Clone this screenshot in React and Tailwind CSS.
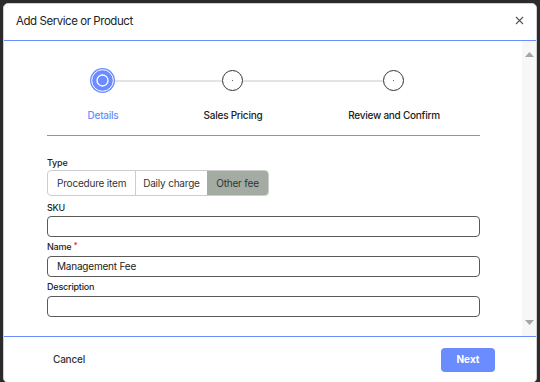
export default function App() {
  return (
    <div className="h-[382px] w-[540px] overflow-hidden bg-[#2b2b2b] pt-[3px] pl-[3px] font-[family-name:Inter,sans-serif]">
      <div className="flex h-[380px] w-[534px] flex-col overflow-hidden rounded-[5px] border border-[#cfcfcf] bg-white">
        {/* header */}
        <div className="flex h-[37px] shrink-0 items-center justify-between border-b border-[#6b8cff] pl-[12px] pr-[12px]">
          <h1 className="text-[11.5px] tracking-[-0.45px] text-[#222]">Add Service or Product</h1>
          <svg width="9" height="9" viewBox="0 0 9 9" className="mb-[4px]">
            <path d="M1 1L8 8M8 1L1 8" stroke="#555" strokeWidth="1.1" />
          </svg>
        </div>

        {/* body */}
        <div className="flex h-[295px] shrink-0">
          <div className="flex-1 pl-[43px] pr-[42px]">
            {/* stepper */}
            <div className="mt-[27px] flex items-center pl-[43px]">
              <svg width="25" height="25" viewBox="0 0 25 25">
                <circle cx="12.5" cy="12.5" r="12.5" fill="#6b8cff" />
                <circle cx="12.5" cy="12.5" r="10.8" fill="none" stroke="#fff" strokeWidth="1" />
                <circle cx="12.5" cy="12.5" r="5.5" fill="none" stroke="#fff" strokeWidth="1.3" />
              </svg>
              <div className="h-[2px] w-[107px] bg-[#e3e3e3]" />
              <div className="flex h-[21px] w-[21px] items-center justify-center rounded-full border border-[#333]">
                <div className="h-[1.5px] w-[1.5px] rounded-full bg-[#333]" />
              </div>
              <div className="h-[2px] w-[140px] bg-[#e3e3e3]" />
              <div className="flex h-[21px] w-[21px] items-center justify-center rounded-full border border-[#333]">
                <div className="h-[1.5px] w-[1.5px] rounded-full bg-[#333]" />
              </div>
            </div>
            <div className="mt-[16px] flex pl-[6px] text-[10px] font-medium leading-[12px] tracking-[-0.25px]">
              <div className="w-[100px] text-center text-[#6b8cff]">Details</div>
              <div className="ml-[30px] w-[100px] text-center text-[#222]">Sales Pricing</div>
              <div className="ml-[61px] w-[100px] text-center text-[#222]">Review and Confirm</div>
            </div>
            <div className="mt-[14px] h-px bg-[#7b93ee]" />

            {/* form */}
            <div className="mt-[21px] text-[9px] font-medium leading-[12px] tracking-[-0.2px] text-[#222]">Type</div>
            <div className="mt-[1px] flex h-[26px] w-fit overflow-hidden rounded-[4px] border border-[#cdcdcd] text-[10px] tracking-[-0.2px] text-[#333]">
              <div className="flex items-center px-[9px]">Procedure item</div>
              <div className="flex items-center border-l border-[#cdcdcd] px-[7px]">Daily charge</div>
              <div className="flex items-center bg-[#a4aba3] px-[9.5px]">Other fee</div>
            </div>

            <div className="mt-[6px] text-[9px] font-medium leading-[12px] tracking-[-0.2px] text-[#222]">SKU</div>
            <div className="mt-[2px] h-[21px] rounded-[4px] border border-[#5a5a5a]" />

            <div className="mt-[4px] text-[9px] font-medium leading-[12px] tracking-[-0.2px] text-[#222]">
              Name<span className="ml-[2px] align-top text-[8px] leading-[8px] text-[#e02020]">*</span>
            </div>
            <div className="mt-[3px] flex h-[21px] items-center rounded-[4px] border border-[#5a5a5a] px-[9px] text-[10px] tracking-[-0.2px] text-[#222]">
              Management Fee
            </div>

            <div className="mt-[4px] text-[9px] font-medium leading-[12px] tracking-[-0.2px] text-[#222]">Description</div>
            <div className="mt-[3px] h-[21px] rounded-[4px] border border-[#5a5a5a]" />
          </div>

          {/* scrollbar */}
          <div className="flex w-[14px] flex-col items-center justify-between bg-[#f7f7f7] py-[11px]">
            <svg width="9" height="5" viewBox="0 0 9 5">
              <path d="M0 5L4.5 0L9 5Z" fill="#a5a5a5" />
            </svg>
            <svg width="9" height="5" viewBox="0 0 9 5">
              <path d="M0 0L9 0L4.5 5Z" fill="#a5a5a5" />
            </svg>
          </div>
        </div>

        {/* footer */}
        <div className="flex flex-1 items-center justify-between border-t border-[#6b8cff] pl-[43px] pr-[41px]">
          <button className="px-[6px] text-[10px] font-medium tracking-[-0.2px] text-[#333]">Cancel</button>
          <button className="h-[24px] w-[54px] rounded-[4px] bg-[#6b8cff] text-[10px] font-bold text-white">Next</button>
        </div>
      </div>
    </div>
  );
}
